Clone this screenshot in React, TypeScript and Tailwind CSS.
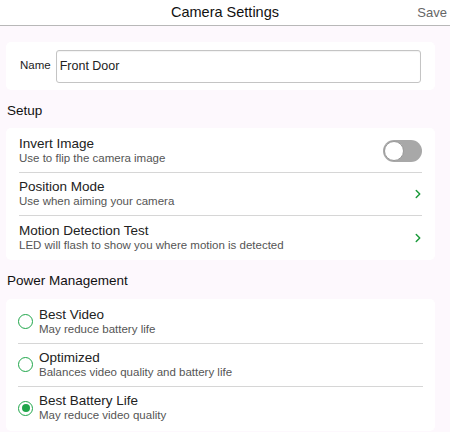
import { ChevronRight } from "lucide-react";

const font = { fontFamily: '"Liberation Sans", Arial, sans-serif' };

function Row({
  title,
  sub,
  right,
  last,
}: {
  title: string;
  sub: string;
  right?: React.ReactNode;
  last?: boolean;
}) {
  return (
    <div className={`flex h-[43px] items-center ${last ? "" : "border-b border-[#d6d6d6]"}`}>
      <div className="flex-1 leading-[15px]">
        <div className="text-[13.5px] text-[#222]">{title}</div>
        <div className="text-[11.5px] text-[#555]">{sub}</div>
      </div>
      {right}
    </div>
  );
}

function Radio({ on }: { on?: boolean }) {
  return (
    <span className="mr-[6px] flex h-[15px] w-[15px] items-center justify-center rounded-full border border-[#1fa64a]">
      {on && <span className="h-[8px] w-[8px] rounded-full bg-[#1fa64a]" />}
    </span>
  );
}

function RadioRow({ title, sub, on, last }: { title: string; sub: string; on?: boolean; last?: boolean }) {
  return (
    <div className={`flex h-[43px] items-center ${last ? "" : "border-b border-[#d6d6d6]"}`}>
      <Radio on={on} />
      <div className="flex-1 leading-[15px]">
        <div className="text-[13.5px] text-[#222]">{title}</div>
        <div className="text-[11.5px] text-[#555]">{sub}</div>
      </div>
    </div>
  );
}

const Chevron = () => (
  <ChevronRight className="-mr-[3px] h-[14px] w-[14px] text-[#1a9a3a]" strokeWidth={2.5} />
);

export default function App() {
  return (
    <div style={font} className="h-[432px] w-[450px] overflow-hidden bg-[#fdf8fd]">
      <header className="flex h-[26px] items-center border-b border-[#b8b8b8] bg-white px-[3px]">
        <div className="w-[30px]" />
        <h1 className="flex-1 text-center text-[14.5px] text-[#111]">Camera Settings</h1>
        <span className="w-[30px] text-right text-[13px] text-[#666]">Save</span>
      </header>

      <main className="px-[6px] pt-[16px]">
        <section className="flex h-[48px] w-[429px] items-center rounded-[5px] bg-white px-[14px]">
          <span className="mr-[5px] text-[11.5px] text-[#222]">Name</span>
          <input
            readOnly
            value="Front Door"
            className="h-[33px] flex-1 rounded-[3px] border border-[#c4c4c4] px-[3px] text-[12.5px] text-[#222] shadow-[inset_0_1px_1px_rgba(0,0,0,0.05)] outline-none"
          />
        </section>

        <h2 className="mt-[11px] mb-[7px] pl-[1px] text-[13.5px] font-medium text-[#111]">Setup</h2>
        <section className="w-[429px] rounded-[5px] bg-white px-[13px] pt-[2px] pb-[1px]">
          <Row
            title="Invert Image"
            sub="Use to flip the camera image"
            right={
              <span className="flex h-[22px] w-[39px] items-center rounded-full bg-[#a8a8a8] p-[1px]">
                <span className="h-[20px] w-[20px] rounded-full border border-[#999] bg-white" />
              </span>
            }
          />
          <Row title="Position Mode" sub="Use when aiming your camera" right={<Chevron />} />
          <Row
            title="Motion Detection Test"
            sub="LED will flash to show you where motion is detected"
            right={<Chevron />}
            last
          />
        </section>

        <h2 className="mt-[11px] mb-[7px] pl-[1px] text-[13.5px] font-medium text-[#111]">Power Management</h2>
        <section className="w-[429px] rounded-[5px] bg-white px-[12px] pt-[2px] pb-[1px]">
          <RadioRow title="Best Video" sub="May reduce battery life" />
          <RadioRow title="Optimized" sub="Balances video quality and battery life" />
          <RadioRow title="Best Battery Life" sub="May reduce video quality" on last />
        </section>
      </main>
    </div>
  );
}
